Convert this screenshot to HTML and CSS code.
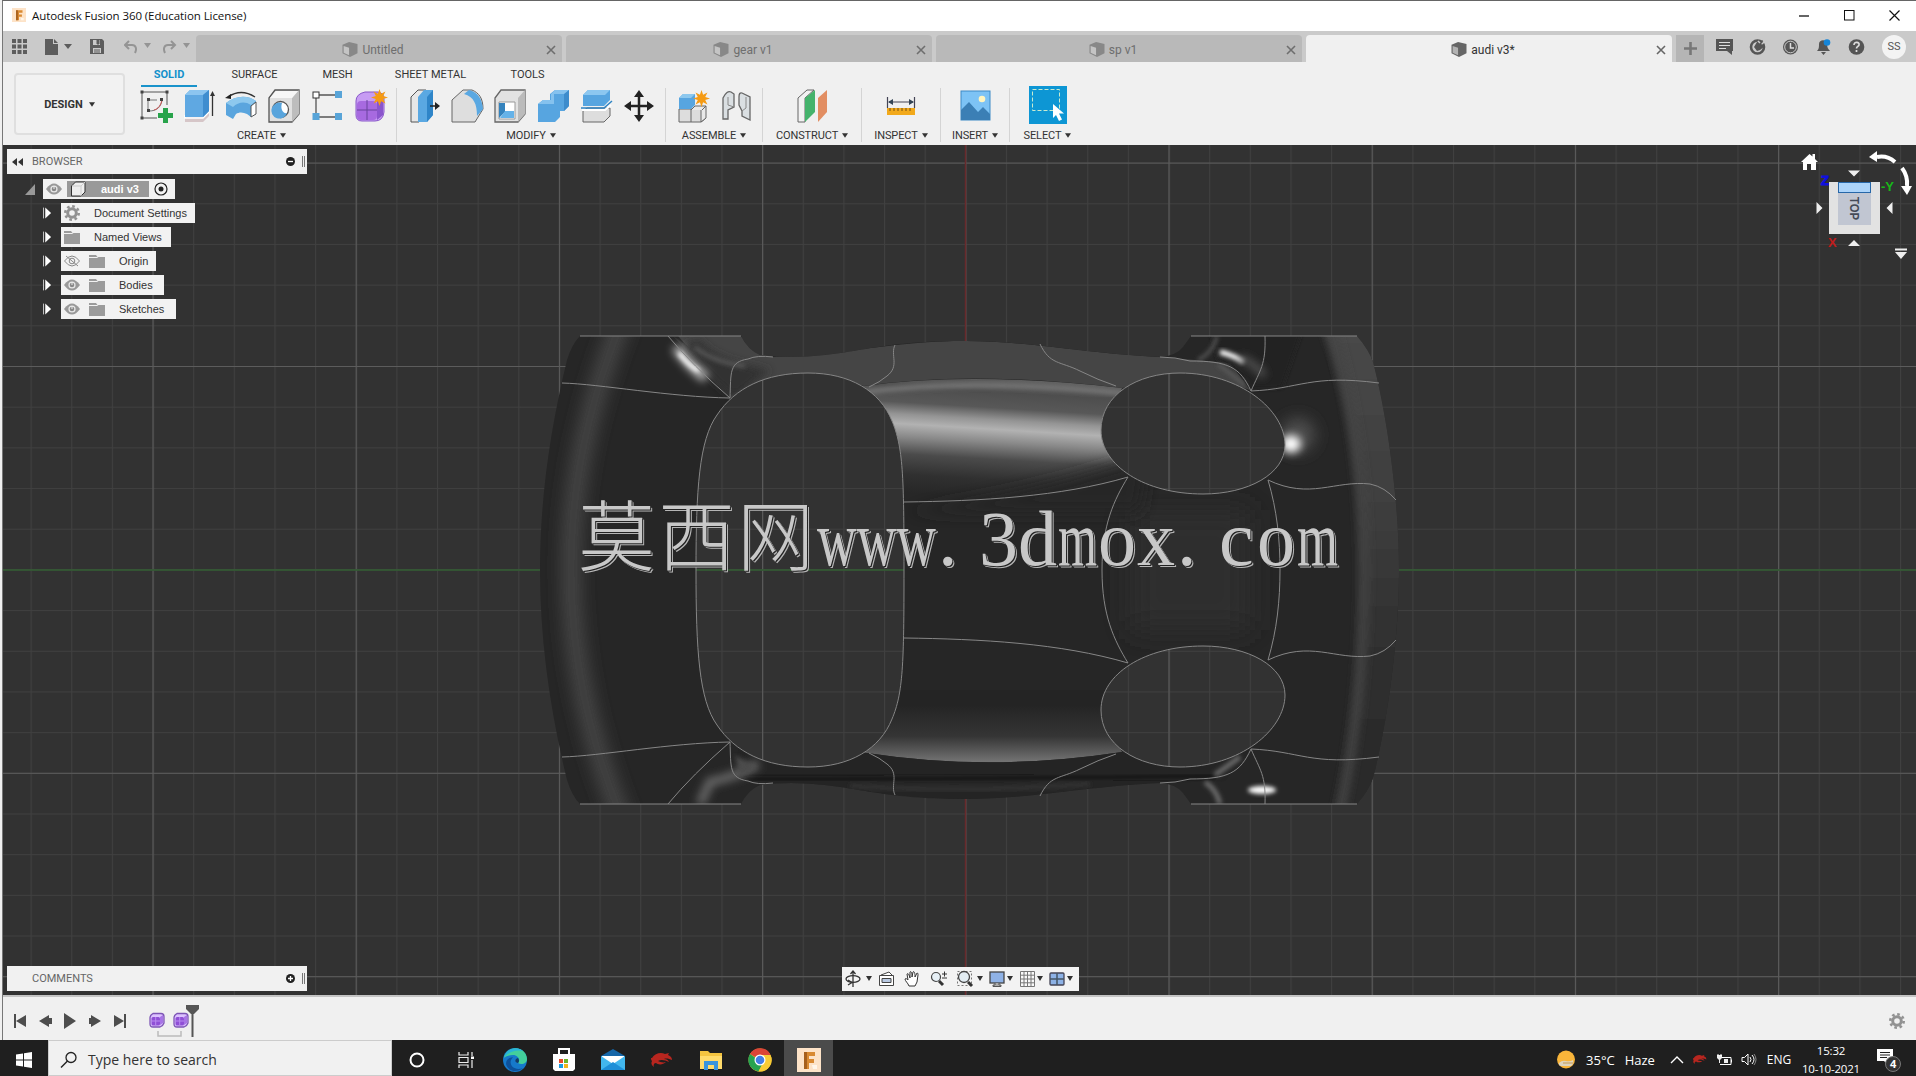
FILE: index.html
```html
<!DOCTYPE html>
<html lang="en">
<head>
  <meta charset="UTF-8">
  <title>Autodesk Fusion 360 (Education License)</title>
  <link rel="stylesheet" href="styles.css">
</head>
<body>
<svg class="defs" width="0" height="0">
  <defs>
    <symbol id="cube" viewBox="0 0 16 16">
      <path d="M0 3L7 0l9 2v10l-8 4-8-4z" fill="currentColor"/>
      <path d="M1.2 4.2L7 6v8.2L1.2 11.4z" fill="#fff" opacity=".5"/>
    </symbol>
    <symbol id="caret" viewBox="0 0 8 6"><path d="M0 0h8L4 6z" fill="currentColor"/></symbol>
    <symbol id="close" viewBox="0 0 10 10"><path d="M1 1l8 8M9 1L1 9" stroke="currentColor" stroke-width="1.6"/></symbol>
    <symbol id="eye" viewBox="0 0 16 12">
      <path d="M0 6q8-11 16 0q-8 11-16 0z" fill="#999"/>
      <circle cx="8" cy="6" r="3.6" fill="#e8e8e8"/><circle cx="8" cy="6" r="2.3" fill="#888"/><path d="M8 3v3" stroke="#eee"/>
    </symbol>
    <symbol id="folder" viewBox="0 0 16 13"><path d="M0 0h7l1.500 2H0zM0 3h8l1.500-1H16v11H0z" fill="#9b9b9b"/></symbol>
    <symbol id="gear" viewBox="0 0 16 16">
      <circle cx="8" cy="8" r="4.300" fill="none" stroke="#929292" stroke-width="3"/>
      <circle cx="8" cy="8" r="6.700" fill="none" stroke="#929292" stroke-width="2.600" stroke-dasharray="2.630 2.630"/>
    </symbol>
    <symbol id="tri" viewBox="0 0 10 12"><path d="M.5 0v12" stroke="#ddd"/><path d="M2.500 0v12L9 6z" fill="#fff"/></symbol>
    <symbol id="form" viewBox="0 0 16 16">
      <path d="M1 6q0-3 3-4.500h8q3 0 3 3V11q-1 3-4 4H4q-3 0-3-3z" fill="#dcc2ff" stroke="#7d55b5" stroke-width="1.300"/>
      <rect x="2.500" y="5" width="8.500" height="8.500" rx="1.500" fill="#8f4fd6"/>
      <path d="M6.700 5v8M2.500 9H11" stroke="#b98af0"/><path d="M11 5l3-2v8l-3 2z" fill="#a874e6"/>
    </symbol>
    <symbol id="spark" viewBox="0 0 16 16"><path d="M8 0l1.500 4.500L13.600 2.400 11.500 6.500 16 8l-4.500 1.500 2.100 4.100-4.100-2.100L8 16l-1.500-4.500-4.100 2.100 2.100-4.100L0 8l4.500-1.500L2.400 2.400l4.100 2.100z" fill="#f59b14"/></symbol>
    <symbol id="fusion" viewBox="0 0 24 24">
      <rect width="24" height="24" fill="#fde3c8"/>
      <path d="M7 4h11v4h-6v3h5v4h-5v6H7z" fill="#d98a32"/><path d="M7 4h3v17H7z" fill="#a65f1c"/><path d="M15 17h5v4h-4z" fill="#fff6ea"/>
    </symbol>
    <symbol id="dragon" viewBox="0 0 22 16"><path d="M1 6C4 1 10 0 14 2l4-1-1 2c3 1 4 3 4 5-3-1-5-2-8-1 3 0 4 1 5 3-4-2-8-3-11-1 2 1 5 2 8 1-3 3-8 3-10 1-2 0-3 2-2 4-3-2-3-4-2-6-1-1-1-2-1-3z" fill="#b8261f"/></symbol>
  </defs>
</svg>

<div class="app">
  <header class="titlebar">
    <svg class="logo" width="14" height="14"><use href="#fusion"/></svg>
    <span class="app-name">Autodesk Fusion 360 (Education License)</span>
    <div class="win-buttons">
      <svg width="11" height="11"><path d="M0 6h10" stroke="#111" stroke-width="1.300"/></svg>
      <svg width="11" height="11"><rect x=".5" y=".5" width="9.500" height="9.500" fill="none" stroke="#111"/></svg>
      <svg width="11" height="11"><path d="M.5 .5l10 10M10.500 .5l-10 10" stroke="#111" stroke-width="1.200"/></svg>
    </div>
  </header>

  <nav class="tabbar">
    <div class="quick">
      <svg class="grid-icon" width="15" height="15" fill="#5d5d5d"><path d="M0 0h4v4H0zM5.500 0h4v4h-4zM11 0h4v4h-4zM0 5.500h4v4H0zM5.500 5.500h4v4h-4zM11 5.500h4v4h-4zM0 11h4v4H0zM5.500 11h4v4h-4zM11 11h4v4h-4z"/></svg>
      <svg class="file-icon" width="27" height="16" fill="#5d5d5d"><path d="M0 0h8v5h5v11H0zM9 0l4 4H9zM19 5h8l-4 5z"/></svg>
      <svg class="save-icon" width="14" height="15"><path d="M0 0h12l2 2v13H0z" fill="#5d5d5d"/><path d="M3 1h7v5H3zM3 9h8v5H3z" fill="#c9c9c9"/><path d="M7 1h2v4H7zM4 11h6M4 13h6" fill="#5d5d5d" stroke="#5d5d5d"/></svg>
      <svg class="undo-icon" width="27" height="14"><path d="M5 1L1 5l4 4M1 5h7c4 0 5 4 3 8" fill="none" stroke="#949494" stroke-width="2"/><path d="M20 3h7l-3.500 5z" fill="#949494"/></svg>
      <svg class="redo-icon" width="27" height="14"><path d="M8 1l4 4-4 4M12 5H5C1 5 0 9 2 13" fill="none" stroke="#949494" stroke-width="2"/><path d="M20 3h7l-3.500 5z" fill="#949494"/></svg>
    </div>
    <div class="tab"><span class="tab-name"><svg width="16" height="15"><use href="#cube"/></svg>Untitled</span><svg class="tab-close" width="10" height="10"><use href="#close"/></svg></div>
    <div class="tab"><span class="tab-name"><svg width="16" height="15"><use href="#cube"/></svg>gear v1</span><svg class="tab-close" width="10" height="10"><use href="#close"/></svg></div>
    <div class="tab"><span class="tab-name"><svg width="16" height="15"><use href="#cube"/></svg>sp v1</span><svg class="tab-close" width="10" height="10"><use href="#close"/></svg></div>
    <div class="tab active"><span class="tab-name"><svg width="16" height="15"><use href="#cube"/></svg>audi v3*</span><svg class="tab-close" width="10" height="10"><use href="#close"/></svg></div>
    <div class="tab-add"><svg width="13" height="13"><path d="M6.500 0v13M0 6.500h13" stroke="#777" stroke-width="2.600"/></svg></div>
    <div class="status-icons">
      <svg width="17" height="16"><path d="M0 0h17v12h-1v4l-5-4H0z" fill="#555"/><path d="M3 3.500h11M3 6.500h11M3 9.500h7" stroke="#ddd" stroke-width="1.200"/></svg>
      <svg width="17" height="16"><circle cx="8.500" cy="8" r="6.500" fill="none" stroke="#555" stroke-width="2.600"/><path d="M5 8l3-5 6-2-2 4 4 2-5 4-3 1z" fill="#555"/><path d="M9 2l2 2M13 5l3-3" stroke="#ccc" stroke-width="1.500"/></svg>
      <svg width="17" height="16"><circle cx="8.500" cy="8" r="7.500" fill="#555"/><circle cx="8.500" cy="8" r="5.800" fill="none" stroke="#ccc"/><path d="M8.500 4v5H12" fill="none" stroke="#ddd" stroke-width="1.500"/></svg>
      <svg width="17" height="16"><path d="M2 12c2-2 2-4 2-7 0-5 8-5 8 0 0 3 1 5 3 7zM6 13h5l-2.500 3z" fill="#555"/><circle cx="12" cy="3.500" r="3.300" fill="#1585d8"/></svg>
      <svg width="17" height="16"><circle cx="8.500" cy="8" r="7.800" fill="#555"/><path d="M6 6c0-4 6-3 5 0-.5 1.500-2.500 1.500-2.500 3.500M8.500 11v2" fill="none" stroke="#ddd" stroke-width="1.700"/></svg>
    </div>
    <span class="avatar">SS</span>
  </nav>

  <section class="ribbon">
    <button class="workspace">DESIGN <svg width="6" height="5"><use href="#caret"/></svg></button>
    <div class="ribbon-main">
      <div class="ribbon-tabs">
        <span class="rt solid">SOLID</span>
        <span class="rt surface">SURFACE</span>
        <span class="rt mesh">MESH</span>
        <span class="rt sheet">SHEET METAL</span>
        <span class="rt tools">TOOLS</span>
      </div>
      <div class="groups">
        <div class="group create">
          <div class="icons">
            <svg viewBox="0 0 32 34"><path d="M3 3h25v13M3 3v26h15" fill="none" stroke="#555"/><path d="M9 11h9M9 11v11M10 22c8 0 12-4 13-11" fill="none" stroke="#777"/><path d="M23 11c-1 5-4 9-8 10" fill="none" stroke="#d05050"/><path d="M1.500 1.500h3v3h-3zM26.500 1.500h3v3h-3zM1.500 27.500h3v3h-3zM8 9h3v3H8zM21 9h3v3h-3zM8 20h3v3H8z" fill="#444"/><path d="M24 19h5v5h5v5h-5v5h-5v-5h-5v-5h5z" fill="#28a34b"/></svg>
            <svg viewBox="0 0 32 34"><path d="M3 26h18l6-6v7l-6 6H3z" fill="#d6c6c8"/><path d="M3 26v3h18l6-6v-2" fill="none" stroke="#fff" stroke-width="1.500"/><path d="M3 6l5-5h19v21l-6 6H3z" fill="#5fa8e2"/><path d="M3 6l5-5h19l-6 5z" fill="#8cc5f0"/><path d="M21 6l6-5v21l-6 6z" fill="#3f8dcf"/><path d="M30.500 27V5" stroke="#333" stroke-width="1.300"/><path d="M28 7l2.500-5L33 7z" fill="#333"/></svg>
            <svg viewBox="0 0 32 34"><path d="M1 14c10-8 22-8 30-2v13l-5 3-4-3c-4-2-8-2-11 0l-3 5-7-4z" fill="#5aa5de"/><path d="M1 14c10-8 22-8 30-2l-5 4c-6-4-13-3-18 2z" fill="#8dc8ee"/><path d="M26 17l5-4v12l-5 3z" fill="#fff" stroke="#555"/><path d="M3 8q13-9 27 0" fill="none" stroke="#333" stroke-width="1.300"/><path d="M0 9l6-4v5z" fill="#222"/></svg>
            <svg viewBox="0 0 32 34"><path d="M1 9l6-8h24v24l-7 8H1z" fill="#e0e0e0" stroke="#555" stroke-width="1.300"/><path d="M24 9l7-8v24l-7 8z" fill="#bdbdbd"/><path d="M2 9l6-7h22l-6 7z" fill="#f7f7f7"/><circle cx="12.500" cy="20.500" r="8" fill="#fff" stroke="#555" stroke-width="1.300"/><path d="M14 14a8 8 0 1 0 5 10c-4 1-7-4-5-10z" fill="#58a4dc"/></svg>
            <svg viewBox="0 0 32 34"><path d="M5 7v21M5 6h22M5 28h22" stroke="#555" stroke-width="1.300"/><rect x="2" y="3" width="6" height="6" fill="#fff" stroke="#333"/><path d="M24 2h7v7h-7zM1.500 24h7v7h-7zM24 24h7v7h-7z" fill="#58a4d8"/></svg>
            <svg viewBox="0 0 32 34"><path d="M2 12q0-7 9-9h13q6 1 6 7v13q-1 9-9 9H8q-6 0-6-6z" fill="#c79cf3" stroke="#8857c9"/><path d="M23 12l6-3v17l-6 5z" fill="#8a55cc"/><rect x="3" y="12" width="20" height="19" rx="4" fill="#a76ae0"/><path d="M13 11v20M3 21h20" stroke="#69429c"/><svg x="17" y="0" width="17" height="17"><use href="#spark"/></svg></svg>
          </div>
          <span class="group-name">CREATE <svg width="6" height="5"><use href="#caret"/></svg></span>
        </div>
        <div class="group modify">
          <div class="icons">
            <svg viewBox="0 0 32 34"><path d="M3 8l7-7h8v25l-7 7H3z" fill="#e7e7e7" stroke="#555"/><path d="M10 8l6-7h9v25l-6 7h-9z" fill="#5aa8e2"/><path d="M19 8l6-7v25l-6 7z" fill="#2f85c8"/><path d="M22 17h9" stroke="#222" stroke-width="1.500"/><path d="M27 13l5 4-5 4z" fill="#222"/></svg>
            <svg viewBox="0 0 32 34"><path d="M1 33V11L12 1h9c7 3 11 8 11 19l-8 13z" fill="#dedede" stroke="#666"/><path d="M13 5l5-4c9 2 13 9 14 19l-6 7c0-12-3-19-13-22z" fill="#5aa8e2"/></svg>
            <svg viewBox="0 0 32 34"><path d="M1 9l6-8h24v24l-7 8H1z" fill="#e2e2e2" stroke="#666" stroke-width="1.300"/><path d="M24 9l7-8v24l-7 8z" fill="#bbb"/><path d="M5 13h16v17H5z" fill="#fff" stroke="#999"/><path d="M5 14h6v9l-6 6z" fill="#3583bd"/><path d="M6 29l5-7h9v7z" fill="#65b2e8"/></svg>
            <svg viewBox="0 0 32 34"><path d="M1 15l5-4h7V5l5-4h14v16l-5 5h-4v6l-5 5H1z" fill="#57a5e0"/><path d="M1 15l5-4h8v-6l4-4h14l-4 4H17v10z" fill="#85c2ee"/><path d="M27 5l5-4v16l-5 5z" fill="#3d8ccc"/></svg>
            <svg viewBox="0 0 32 34"><path d="M3 22l4-3h23v8l-6 6H3z" fill="#ddd" stroke="#666"/><path d="M3 6l5-5h22v10l-6 6H3z" fill="#57a5e0"/><path d="M3 6l5-5h22l-5 5z" fill="#8cc7f0"/><path d="M1 19h23l8-7" fill="none" stroke="#2f84c4" stroke-width="1.500"/><path d="M2 21h23l6-5" fill="none" stroke="#fff" stroke-width="2"/></svg>
            <svg viewBox="0 0 32 34"><path d="M16 4v26M4 17h24" stroke="#222" stroke-width="2.500"/><path d="M16 1l5 7H11zM16 33l5-7H11zM1 17l7-5v10zM31 17l-7-5v10z" fill="#222"/></svg>
          </div>
          <span class="group-name">MODIFY <svg width="6" height="5"><use href="#caret"/></svg></span>
        </div>
        <div class="group assemble">
          <div class="icons">
            <svg viewBox="0 0 32 34"><path d="M2 20h26V30l-4 3H2z" fill="#ddd" stroke="#666"/><path d="M14 20v13M14 21l4-4h11l-4 4M29 17v12l-5 4V21" fill="#e9e9e9" stroke="#666"/><path d="M2 20V9l4-4h12v11l-4 4z" fill="#57a5e0"/><path d="M2 9l4-4h12l-4 4z" fill="#8dc8ee"/><svg x="16" y="1" width="17" height="17"><use href="#spark"/></svg></svg>
            <svg viewBox="0 0 32 34"><path d="M3 30V9q4-8 8-6l3 2v13l-6 3v9zM30 31V8l-8-4q-3-1-3 4v8l3 6v5z" fill="#dadfe2" stroke="#666" stroke-width="1.300"/><path d="M14 18l-6-2V8M22 22l4-3V8" fill="none" stroke="#888"/></svg>
          </div>
          <span class="group-name">ASSEMBLE <svg width="6" height="5"><use href="#caret"/></svg></span>
        </div>
        <div class="group construct">
          <div class="icons"><svg viewBox="0 0 32 34"><path d="M2 9l9-8h7L9 9v24H2z" fill="#f2f2f2" stroke="#666"/><path d="M9 9l10-8v22L9 33z" fill="#45b36c"/><path d="M22 9l9-8v22l-9 10z" fill="#e28e62"/></svg></div>
          <span class="group-name">CONSTRUCT <svg width="6" height="5"><use href="#caret"/></svg></span>
        </div>
        <div class="group inspect">
          <div class="icons"><svg viewBox="0 0 32 34"><path d="M2.500 8v11M29.500 8v11M4 13h24" stroke="#445" stroke-width="1.200"/><path d="M3 13l5-3v6zM29 13l-5-3v6z" fill="#345"/><path d="M2 19h28v7H2z" fill="#f2a91b"/><path d="M5 19v3M9 19v3M13 19v3M17 19v3M21 19v3M25 19v3" stroke="#765010"/></svg></div>
          <span class="group-name">INSPECT <svg width="6" height="5"><use href="#caret"/></svg></span>
        </div>
        <div class="group insert">
          <div class="icons"><svg viewBox="0 0 32 34"><rect x="2" y="2" width="29" height="29" fill="#7dc3f5" stroke="#3c8ac6"/><circle cx="23" cy="10" r="3.300" fill="#fff5c0"/><path d="M2 21l8-8 9 10 5-5 7 7v6H2z" fill="#3b7fb5"/></svg></div>
          <span class="group-name">INSERT <svg width="6" height="5"><use href="#caret"/></svg></span>
        </div>
        <div class="group select">
          <div class="icons"><svg class="picked" viewBox="0 0 38 38"><rect width="38" height="38" fill="#0d96d4"/><rect x="3.500" y="3.500" width="27" height="21" fill="none" stroke="#c8ebd0" stroke-dasharray="4 2"/><path d="M24 18v14l3-3 3 6 3-1.500-3-6h5z" fill="#fff"/></svg></div>
          <span class="group-name">SELECT <svg width="6" height="5"><use href="#caret"/></svg></span>
        </div>
      </div>
    </div>
  </section>

  <main class="viewport">
    <svg class="scene" viewBox="3 145 1913 850">
      <defs>
        <pattern id="minor" x="965.3" y="569.4" width="40.640" height="40.680" patternUnits="userSpaceOnUse"><path d="M.5 0v40.680M0 .5h40.640" stroke="#404040" stroke-width="1.200"/></pattern>
        <pattern id="major" x="965.300" y="569.400" width="203.200" height="203.400" patternUnits="userSpaceOnUse"><path d="M.5 0v203.400M0 .5h203.200" stroke="#5c5c5c" stroke-width="1.200"/></pattern>
        <clipPath id="body">
          <path clip-rule="evenodd" d="M580 336H741Q748 350 760 355Q790 359 825 355C870 350 890 341 966 341C1030 341 1080 353 1160 357Q1176 356 1183 347L1191 336H1357Q1369 350 1373 362C1387 415 1399 500 1399 570C1399 640 1387 725 1373 778Q1369 790 1357 804H1191L1183 793Q1176 784 1160 783C1080 787 1030 799 966 799C890 799 870 790 825 785Q790 781 760 785Q748 790 741 804H580Q572 796 567 780C550 710 540 640 540 570C540 500 550 430 567 360Q572 344 580 336Z
          M696 570C696 490 699 440 717 415C735 388 765 373 808 373C850 373 880 391 892 421C903 447 904 475 904 570C904 665 903 693 892 719C880 749 850 767 808 767C765 767 735 752 717 725C699 700 696 650 696 570Z
          M1101 430C1101 395 1137 373 1180 373C1240 373 1285 410 1285 445C1285 474 1248 494 1203 494C1145 494 1101 466 1101 430Z
          M1101 710C1101 745 1137 767 1180 767C1240 767 1285 730 1285 695C1285 666 1248 646 1203 646C1145 646 1101 674 1101 710Z"/>
        </clipPath>
        <filter id="b2" x="-50%" y="-50%" width="200%" height="200%"><feGaussianBlur stdDeviation="2"/></filter>
        <filter id="b4" filterUnits="userSpaceOnUse" x="500" y="300" width="940" height="540"><feGaussianBlur stdDeviation="4"/></filter>
        <filter id="b8" filterUnits="userSpaceOnUse" x="500" y="300" width="940" height="540"><feGaussianBlur stdDeviation="8"/></filter>
        <filter id="b14" filterUnits="userSpaceOnUse" x="500" y="300" width="940" height="540"><feGaussianBlur stdDeviation="14"/></filter>
        <linearGradient id="shine" x1="966" y1="376" x2="966" y2="496" gradientUnits="userSpaceOnUse" gradientTransform="rotate(3.5 966 425)">
          <stop offset="0" stop-color="#606060"/><stop offset=".12" stop-color="#4e4e4e"/><stop offset=".25" stop-color="#585858"/><stop offset=".35" stop-color="#949494"/><stop offset=".43" stop-color="#b2b2b2"/><stop offset=".54" stop-color="#888"/><stop offset=".68" stop-color="#4b4b4b"/><stop offset=".85" stop-color="#303030"/><stop offset="1" stop-color="#272727"/>
        </linearGradient>
        <linearGradient id="low" x1="0" y1="705" x2="0" y2="762" gradientUnits="userSpaceOnUse"><stop offset="0" stop-color="#242424"/><stop offset=".55" stop-color="#353535"/><stop offset="1" stop-color="#747474"/></linearGradient>
        <linearGradient id="side" x1="0" y1="336" x2="0" y2="804" gradientUnits="userSpaceOnUse"><stop offset="0" stop-color="#484848"/><stop offset=".35" stop-color="#3f3f3f"/><stop offset=".65" stop-color="#303030"/><stop offset="1" stop-color="#292929"/></linearGradient>
        <g id="edges">
          <path d="M562 383C600 384 670 397 730 398M668 336Q692 365 730 398M730 398C731 372 729 362 748 359Q757 355 773 357"/>
          <path d="M895 345C890 355 900 366 887 376Q880 382 869 387M1040 344C1050 365 1060 361 1080 371Q1098 380 1116 386"/>
          <path d="M904 502C980 501 1060 497 1128 477C1114 500 1102 525 1102 570M1268 480C1277 510 1280 540 1280 570"/>
          <path d="M1268 480C1310 500 1335 480 1370 484Q1385 487 1396 500M1265 336C1266 365 1260 370 1251 391C1300 389 1310 374 1379 383M1251 391C1240 367 1228 361 1190 361Q1175 357 1160 357"/>
        </g>
      </defs>
      <rect x="3" y="145" width="1913" height="850" fill="#323232"/>
      <rect x="3" y="145" width="1913" height="850" fill="url(#minor)"/>
      <rect x="3" y="145" width="1913" height="850" fill="url(#major)"/>
      <path d="M3 570h1913" stroke="#2e5a2e" stroke-width="1.500"/>
      <path d="M965.500 145v850" stroke="#682a2c" stroke-width="1.500"/>

      <g clip-path="url(#body)">
        <rect x="530" y="330" width="880" height="480" fill="#262626"/>
        <!-- side panels -->
        <path d="M622 320C590 400 571 480 571 570S590 740 622 820" fill="none" stroke="#454545" stroke-width="20" filter="url(#b8)"/>
        <path d="M1322 325C1352 400 1362 490 1362 570S1352 740 1334 820H1420V325Z" fill="url(#side)" filter="url(#b4)"/>
        <path d="M1330 325C1355 410 1364 490 1364 570S1356 740 1338 820" fill="none" stroke="#444" stroke-width="9" filter="url(#b4)"/>
        <path d="M1130 510h120v120h-120z" fill="#2d2d2d" filter="url(#b14)"/>
        <!-- roof shine -->
        <path d="M850 388L864 386Q970 371 1122 388L1102 430 1128 477Q1040 503 904 502H850Z" fill="url(#shine)"/>
        <path d="M1150 452C1090 474 1010 496 904 512H1140Z" fill="#252525" filter="url(#b8)"/>
        <path d="M866 392Q970 378 1122 393" fill="none" stroke="#757575" stroke-width="5" filter="url(#b2)"/>
        <path d="M673 330L740 336 773 357C860 352 900 341 966 341C1040 342 1080 353 1160 357L1230 363 1250 390Q1200 370 1122 388Q970 370 864 386L808 373Q760 375 731 398Z" fill="#454545"/>
        <path d="M673 336L745 385 728 397Z" fill="#343434"/>
        <path d="M700 340Q712 360 770 370L735 398Q700 372 685 345Z" fill="#303030" filter="url(#b4)"/>
        <path d="M695 347Q712 362 745 366" fill="none" stroke="#585858" stroke-width="4" filter="url(#b2)"/>
        <path d="M676 347Q688 365 706 378" fill="none" stroke="#bbb" stroke-width="10" filter="url(#b4)"/>
        <path d="M679 353Q689 366 699 371" fill="none" stroke="#fff" stroke-width="4" filter="url(#b2)"/>
        <path d="M1210 331h92l-20 57-32 1q-10-22-32-28z" fill="#232323" filter="url(#b2)"/>
        <path d="M1220 352Q1233 355 1244 362" fill="none" stroke="#fff" stroke-width="5" filter="url(#b2)"/>
        <path d="M1240 358q15 5 24 18" fill="none" stroke="#555" stroke-width="7" filter="url(#b4)"/>
        <path d="M1217 336Q1213 353 1198 360M1218 364L1245 385" fill="none" stroke="#5c5c5c" stroke-width="3" filter="url(#b2)"/>
        <circle cx="1298" cy="435" r="17" fill="#505050" filter="url(#b8)"/>
        <ellipse cx="1291" cy="444" rx="10" ry="9" fill="#fff" filter="url(#b4)"/>
        <!-- lower sill -->
        <path d="M850 690H1128L1102 710 1122 752Q990 772 867 753L850 750Z" fill="url(#low)"/>
        <path d="M740 741L808 767 867 753Q990 772 1122 752L1180 767 1250 750 1225 781 1160 783C1080 787 1030 799 966 799S850 787 773 783L733 775Z" fill="#242424"/>
        <path d="M745 779Q970 779 1215 776" fill="none" stroke="#191919" stroke-width="4" filter="url(#b2)"/>
        <path d="M850 786Q966 793 1090 784" fill="none" stroke="#333" stroke-width="5" filter="url(#b2)"/>
        <path d="M758 763Q742 775 710 782L700 804" fill="none" stroke="#666" stroke-width="9" filter="url(#b4)"/>
        <path d="M735 755L757 768 740 775Z" fill="#4c4c4c" filter="url(#b2)"/>
        <path d="M1240 757L1215 775M1205 782Q1217 790 1220 804" fill="none" stroke="#6c6c6c" stroke-width="5" filter="url(#b2)"/>
        <ellipse cx="1262" cy="790" rx="14" ry="4" fill="#fff" filter="url(#b2)"/>
      </g>
      <g class="edge">
        <use href="#edges"/><use href="#edges" transform="matrix(1 0 0 -1 0 1140)"/>
        <path d="M696 570C696 490 699 440 717 415C735 388 765 373 808 373C850 373 880 391 892 421C903 447 904 475 904 570C904 665 903 693 892 719C880 749 850 767 808 767C765 767 735 752 717 725C699 700 696 650 696 570Z"/>
        <path d="M1101 430C1101 395 1137 373 1180 373C1240 373 1285 410 1285 445C1285 474 1248 494 1203 494C1145 494 1101 466 1101 430ZM1101 710C1101 745 1137 767 1180 767C1240 767 1285 730 1285 695C1285 666 1248 646 1203 646C1145 646 1101 674 1101 710Z"/>
        <path d="M580 336H741M1191 336H1357M580 804H741M1191 804H1357"/>
      </g>

      <text class="watermark" y="565"><tspan class="han" x="578">莫</tspan><tspan class="han" x="658">西</tspan><tspan class="han" x="737">网</tspan><tspan x="817" textLength="119" lengthAdjust="spacingAndGlyphs">www</tspan><tspan x="938">.</tspan><tspan x="979">3</tspan><tspan x="1018">d</tspan><tspan x="1058" textLength="39" lengthAdjust="spacingAndGlyphs">m</tspan><tspan x="1098" textLength="38" lengthAdjust="spacingAndGlyphs">o</tspan><tspan x="1137" textLength="38" lengthAdjust="spacingAndGlyphs">x</tspan><tspan x="1177">.</tspan><tspan x="1219">c</tspan><tspan x="1257" textLength="38" lengthAdjust="spacingAndGlyphs">o</tspan><tspan x="1297" textLength="41" lengthAdjust="spacingAndGlyphs">m</tspan></text>
    </svg>

    <aside class="browser">
      <div class="panel-head">
        <svg width="12" height="8"><path d="M5 0v8L0 4zM11 0v8L6 4z" fill="#333"/></svg>
        <span>BROWSER</span>
        <svg class="dot" width="9" height="9"><circle cx="4.500" cy="4.500" r="4.500" fill="#222"/><path d="M2 4.500h5" stroke="#fff" stroke-width="1.300"/></svg>
        <i class="grip"></i>
      </div>
      <ul class="tree">
        <li class="root">
          <svg width="10" height="11"><path d="M10 0v11H0z" fill="#999"/></svg>
          <div class="node"><svg width="16" height="12"><use href="#eye"/></svg><div class="picked-name"><svg width="17" height="16"><path d="M1.500 5l4-4H15v10l-4 4H1.500z" fill="#eee" stroke="#333" stroke-linejoin="round"/><path d="M2 5h9v10M11 5l4-4" fill="none" stroke="#ccc"/></svg><b>audi v3</b></div><svg width="14" height="14"><circle cx="7" cy="7" r="6" fill="none" stroke="#222" stroke-width="1.200"/><circle cx="7" cy="7" r="2.500" fill="#222"/></svg></div>
        </li>
        <li><svg width="9" height="12"><use href="#tri"/></svg><div class="node w134"><svg width="16" height="16"><use href="#gear"/></svg><span>Document Settings</span></div></li>
        <li><svg width="9" height="12"><use href="#tri"/></svg><div class="node w110"><svg width="16" height="13"><use href="#folder"/></svg><span>Named Views</span></div></li>
        <li><svg width="9" height="12"><use href="#tri"/></svg><div class="node deep w95"><svg width="16" height="12"><path d="M.5 6q7.500-10 15 0q-7.500 10-15 0z" fill="none" stroke="#888"/><circle cx="8" cy="6" r="2.800" fill="none" stroke="#888"/><path d="M2 1l12 10" stroke="#888"/></svg><svg width="16" height="13"><use href="#folder"/></svg><span>Origin</span></div></li>
        <li><svg width="9" height="12"><use href="#tri"/></svg><div class="node deep w103"><svg width="16" height="12"><use href="#eye"/></svg><svg width="16" height="13"><use href="#folder"/></svg><span>Bodies</span></div></li>
        <li><svg width="9" height="12"><use href="#tri"/></svg><div class="node deep w115"><svg width="16" height="12"><use href="#eye"/></svg><svg width="16" height="13"><use href="#folder"/></svg><span>Sketches</span></div></li>
      </ul>
    </aside>

    <svg class="viewcube" viewBox="1796 145 120 120">
      <path d="M1801 162l8.500-8 3 2.500V154h2.500v5l3 3h-2v8h-5v-6h-4v6h-4v-8z" fill="#fff"/>
      <path d="M1895 162q-8-7-18-5" fill="none" stroke="#fff" stroke-width="4"/><path d="M1869 157l8-6v11z" fill="#fff"/>
      <path d="M1902 168q6 8 5 18" fill="none" stroke="#fff" stroke-width="4"/><path d="M1901 186h11l-5 9z" fill="#fff"/>
      <text x="1821" y="185" fill="#1010e0" stroke="#1010e0">Z</text><text x="1828" y="247" fill="#c01c1c">X</text><text x="1881" y="191" fill="#18b818">-Y</text>
      <rect x="1829" y="182" width="51" height="52" fill="#e2e2e2"/><rect x="1838" y="182" width="33" height="43" fill="#c1c6d2"/>
      <rect x="1838.500" y="182.500" width="32" height="10" fill="#acd4fa" stroke="#2767a8"/>
      <text class="face" transform="translate(1850 197) rotate(90)" textLength="23" lengthAdjust="spacingAndGlyphs">TOP</text>
      <path d="M1848 170.500h12l-6 6zM1848 246h12l-6-6zM1816.500 202v12l6-6zM1892.500 202v12l-6-6zM1895 252h12l-6 7zM1895 248.500h12v2h-12z" fill="#eee"/>
    </svg>

    <div class="panel-head comments">
      <span>COMMENTS</span>
      <svg class="dot" width="9" height="9"><circle cx="4.500" cy="4.500" r="4.500" fill="#222"/><path d="M2 4.500h5M4.500 2v5" stroke="#fff" stroke-width="1.300"/></svg>
      <i class="grip"></i>
    </div>

    <div class="navbar">
      <svg width="28" height="18"><ellipse cx="8" cy="9" rx="7" ry="3.300" fill="none" stroke="#333" stroke-width="1.300"/><path d="M8 1v16M5.500 4L8 1l2.500 3M3 10l4 2.500-4 2.500" fill="none" stroke="#333" stroke-width="1.300"/><path d="M21 6h6l-3 5z" fill="#333"/></svg>
      <svg class="plain" width="17" height="18"><path d="M1.500 5.500h14v10h-14zM3 5l8-3 3 3" fill="#fff" stroke="#444"/><path d="M4 8.500h9v4H4z" fill="#b9c9e2" stroke="#444"/></svg>
      <svg class="plain" width="17" height="18"><path d="M5 16c-1-3-4-5-4-7 1-1 2 0 3 1L3 4c1-1 2 0 3 4V2c1-1 2 0 2 5l1-5c1-1 2 0 2 5l2-4c1 0 1 1 1 2l-1 7-2 4z" fill="#fff" stroke="#333"/></svg>
      <svg class="plain" width="17" height="18"><circle cx="6" cy="7" r="4.500" fill="#e6eff5" stroke="#444" stroke-width="1.200"/><path d="M9 11l4 4" stroke="#333" stroke-width="3"/><path d="M12 4h5M14.500 1.500v5M12 8h5" stroke="#333"/></svg>
      <svg width="28" height="18"><rect x="1.500" y="1.500" width="14" height="14" fill="none" stroke="#777" stroke-dasharray="2 2"/><circle cx="8" cy="7" r="5.500" fill="#e3edf3" stroke="#444" stroke-width="1.300"/><path d="M12 12l4 4" stroke="#333" stroke-width="3"/><path d="M21 6h6l-3 5z" fill="#333"/></svg>
      <svg width="25" height="18"><rect x="1" y="2" width="14" height="11" fill="#8fb2e6" stroke="#444" stroke-width="1.300"/><path d="M6 13v2H4v1.500h8V15h-2v-2" fill="#aaa" stroke="#555"/><path d="M18 6h6l-3 5z" fill="#333"/></svg>
      <svg width="25" height="18"><path d="M1.500 1.500h14v15h-14zM1.500 5.200h14M1.500 9h14M1.500 12.800h14M5 1.500v15M8.500 1.500v15M12 1.500v15" fill="#f9f9f9" stroke="#777"/><path d="M18 6h6l-3 5z" fill="#333"/></svg>
      <svg width="25" height="18"><rect x="1" y="3" width="14" height="12" rx="1" fill="#8db2e6" stroke="#445" stroke-width="1.300"/><path d="M8 3v12M1 9h14" stroke="#456" stroke-width="1.500"/><path d="M18 6h6l-3 5z" fill="#333"/></svg>
    </div>
  </main>

  <footer class="timeline">
    <svg width="114" height="16" fill="#4d4d4d"><path d="M0 1h2v14H0zM12 2v12L2 8zM35 2v12L25 8zM35 5h3v6h-3zM50 0v16l12-8zM75 5h2v6h-2zM77 2v12l10-6zM100 2v12l10-6zM110 1h2v14h-2z"/></svg>
    <div class="features">
      <svg width="52" height="34"><svg x="0" y="8" width="16" height="16"><use href="#form"/></svg><svg x="24" y="8" width="16" height="16"><use href="#form"/></svg><path d="M9 27v5h23v-5" fill="none" stroke="#bbb" stroke-width="1.500"/><path d="M37 1h13v4l-5 5h-3l-5-5z" fill="#555"/><path d="M43.500 8v25" stroke="#555" stroke-width="2"/></svg>
    </div>
    <svg class="tl-gear" width="16" height="16"><use href="#gear"/></svg>
  </footer>
</div>

<div class="taskbar">
  <div class="start"><svg width="16" height="16" fill="#fff"><path d="M0 2.500l7-1v6H0zM8 1.300L16 0v7.500H8zM0 8.500h7v6l-7-1zM8 8.500h8V16l-8-1.300z"/></svg></div>
  <div class="search"><svg width="18" height="18"><circle cx="11" cy="6.500" r="5" fill="none" stroke="#222" stroke-width="1.300"/><path d="M7.500 10L1 16.500" stroke="#222" stroke-width="1.500"/></svg>Type here to search</div>
  <div class="pinned">
    <div class="pin"><svg width="16" height="16"><circle cx="8" cy="8" r="6.500" fill="none" stroke="#fff" stroke-width="2"/></svg></div>
    <div class="pin"><svg width="16" height="16"><path d="M1 0v3h9V0M1 16v-3h9v3M1 5.500h9v5H1zM14 0v4M14 8v8" fill="none" stroke="#eee" stroke-width="1.200"/><path d="M13 4.500h3v2.500h-3z" fill="#fff"/></svg></div>
    <div class="pin"><svg width="24" height="24"><circle cx="12" cy="12" r="12" fill="#1679cb"/><path d="M1 10C3-3 23-3 24 11c0 5-6 6-9 4 3-3 0-8-5-8-4 0-7 1-9 3z" fill="#43cf9c"/><path d="M1 9C5-2 16-1 20 3 12 1 5 5 1 9z" fill="#29b4d8"/><path d="M8 12c-2 6 4 11 12 8-5 5-15 4-17-4 0-5 3-6 7-7z" fill="#0d519b"/><path d="M15 10q2 3 0 5c-3 0-4-4 0-5z" fill="#153c66"/></svg></div>
    <div class="pin"><svg width="24" height="24"><path d="M7 6V1h10v5" fill="none" stroke="#fff" stroke-width="2"/><path d="M1 6h22v15l-2 2H3l-2-2z" fill="#fff"/><path d="M7 11h4v4H7z" fill="#e84b2c"/><path d="M12 11h4v4h-4z" fill="#6fb629"/><path d="M7 16h4v4H7z" fill="#1c9be0"/><path d="M12 16h4v4h-4z" fill="#f5b41a"/></svg></div>
    <div class="pin"><svg width="24" height="24"><path d="M0 8l12-7 12 7v14H0z" fill="#1566a8"/><path d="M1 8h22v8H1z" fill="#fff"/><path d="M0 8l12 8 12-8v14H0z" fill="#42b7ee"/><path d="M0 22l12-8 12 8z" fill="#1e8fd8"/></svg></div>
    <div class="pin"><svg width="22" height="16"><use href="#dragon"/></svg></div>
    <div class="pin"><svg width="24" height="22"><path d="M1 2h8l2 2h12v16H1z" fill="#f4c440"/><path d="M1 7h22v13H1z" fill="#ffdb6b"/><path d="M5 21v-9h14v9h-4v-5H9v5z" fill="#3994dc"/></svg></div>
    <div class="pin"><svg width="24" height="24"><circle cx="12" cy="12" r="11.500" fill="#f4c52a"/><path d="M12 12L2 6a11.500 11.500 0 0 1 20.500 1z" fill="#db4437"/><path d="M2 6a11.500 11.500 0 0 0 8.500 17.400L15 15z" fill="#27a351"/><path d="M22.500 7H12v5l3 3-4.500 8.400A11.500 11.500 0 0 0 22.500 7z" fill="#f8cb35"/><circle cx="12" cy="12" r="5.500" fill="#fff"/><circle cx="12" cy="12" r="4.300" fill="#437ee6"/></svg></div>
    <div class="pin current"><svg width="24" height="24"><use href="#fusion"/></svg></div>
  </div>
  <div class="tray">
    <div class="t24"><svg width="20" height="20"><circle cx="10" cy="9.500" r="9" fill="#f9b53a"/><path d="M3 13q3-3 7-2t7-1q1 4-2 6H5q-3-1-2-3z" fill="#dfd4bd"/><path d="M7 13h10" stroke="#c59a55"/></svg></div>
    <div class="t85 weather"><span>35°C</span><span>Haze</span></div>
    <div class="t27"><svg width="14" height="8"><path d="M1 7l6-6 6 6" fill="none" stroke="#fff" stroke-width="1.400"/></svg></div>
    <div class="t20"><svg width="14" height="11" viewBox="0 0 22 16"><use href="#dragon"/></svg></div>
    <div class="t28"><svg width="16" height="12"><path d="M5 3.500h10v7H4" fill="none" stroke="#fff"/><path d="M8 5h4v4H8zM1 1h5v3L4 6v3H3V6L1 4z" fill="#eee"/><path d="M15.500 5.500v3M2 0v2M5 0v2" stroke="#fff"/></svg></div>
    <div class="t22"><svg width="16" height="13"><path d="M1 4.500h2.500L7 1v11L3.500 8.500H1z" fill="none" stroke="#fff"/><path d="M9 4q2 2.500 0 5M11 2q4 4.500 0 9" fill="none" stroke="#fff"/><path d="M13 1q4 5.500 0 11" fill="none" stroke="#888"/></svg></div>
    <div class="t38">ENG</div>
    <div class="t66 clock"><span>15:32</span><span>10-10-2021</span></div>
    <div class="t50"><svg width="26" height="24"><path d="M1 1h16v12h-5v4l-4-4H1z" fill="#fff"/><path d="M4 4.500h10M4 7h10M4 9.500h7" stroke="#222"/><circle cx="17" cy="16" r="7.500" fill="#333" stroke="#777"/><text class="badge" x="14" y="20">4</text></svg></div>
  </div>
</div>
</body>
</html>
```
FILE: styles.css
```css
* {
  margin: 0;
  padding: 0;
  box-sizing: border-box;
}
body {
  width: 1916px;
  height: 1076px;
  overflow: hidden;
  background: #f0f0f0;
  color: #333;
  font-family: Roboto, "Liberation Sans", sans-serif;
  font-size: 11px;
}
ul, li {
  list-style: none;
}
svg {
  display: block;
  flex: none;
}
.defs {
  height: 0;
}
.app {
  height: 1040px;
  border-top: 1px solid #656565;
  border-left: 1px solid #777;
  margin-left: 2px;
  display: flex;
  flex-direction: column;
}

/* title bar */
.titlebar {
  height: 30px;
  background: #fff;
  display: flex;
  align-items: center;
  padding: 0 16px 2px 9px;
}
.app-name {
  margin-left: 6px;
  font-family: "Open Sans", "Noto Sans", sans-serif;
  font-size: 11.5px;
  letter-spacing: -.08px;
  color: #111;
}
.win-buttons {
  margin-left: auto;
  display: flex;
  gap: 34px;
}

/* document tabs */
.tabbar {
  height: 31px;
  background: #cacaca;
  display: flex;
  align-items: flex-end;
}
.quick {
  width: 193px;
  height: 31px;
  display: flex;
  align-items: center;
  padding-left: 9px;
}
.file-icon {
  margin-left: 18px;
}
.save-icon {
  margin-left: 18px;
}
.undo-icon {
  margin-left: 20px;
}
.redo-icon {
  margin-left: 12px;
}
.tab {
  width: 366px;
  height: 27px;
  margin-right: 4px;
  border-radius: 4px 4px 0 0;
  background: #b9b9b9;
  color: #6e6e6e;
  display: flex;
  align-items: center;
  padding: 2px 6px 0 4px;
  font-size: 12px;
}
.tab-name {
  flex: 1;
  display: flex;
  align-items: center;
  justify-content: center;
  gap: 4px;
}
.tab-name svg {
  color: #888;
}
.tab.active {
  background: #f0f0f0;
  color: #333;
}
.tab.active svg {
  color: #666;
}
.tab-add {
  width: 28px;
  height: 27px;
  background: #b5b5b5;
  display: flex;
  align-items: center;
  justify-content: center;
}
.status-icons {
  display: flex;
  gap: 16px;
  margin-left: 12px;
  padding-bottom: 7px;
}
.avatar {
  width: 24px;
  height: 24px;
  margin: 0 0 3px 17px;
  border-radius: 50%;
  background: #f3f3f3;
  text-align: center;
  line-height: 24px;
  color: #555;
}

/* ribbon */
.ribbon {
  height: 83px;
  background: #f0f0f0;
  display: flex;
}
.workspace {
  width: 111px;
  height: 62px;
  margin: 11px 2px 0 11px;
  border: 2px solid #dfdfdf;
  border-radius: 4px;
  background: #f2f2f2;
  color: #333;
  font: bold 11px Roboto, sans-serif;
  display: flex;
  align-items: center;
  justify-content: center;
  gap: 6px;
}
.ribbon-main {
  flex: 1;
}
.ribbon-tabs {
  height: 25px;
  padding-left: 14px;
  display: flex;
}
.rt {
  text-align: center;
  line-height: 26px;
}
.solid {
  width: 56px;
  color: #1390cb;
  font-weight: bold;
  border-bottom: 2px solid #1a93cb;
}
.surface {
  width: 115px;
}
.mesh {
  width: 51px;
}
.sheet {
  width: 135px;
}
.tools {
  width: 59px;
}
.groups {
  display: flex;
  padding-top: 1px;
}
.group {
  height: 54px;
  padding-top: 1px;
  border-right: 1px solid #d4d4d4;
  display: flex;
  flex-direction: column;
  align-items: center;
  justify-content: space-between;
}
.create {
  width: 270px;
}
.modify {
  width: 269px;
}
.assemble {
  width: 97px;
}
.construct {
  width: 99px;
}
.inspect {
  width: 79px;
}
.insert {
  width: 69px;
}
.select {
  width: 75px;
  border-right: 0;
}
.icons {
  display: flex;
  gap: 11px;
  height: 34px;
}
.create .icons {
  padding-left: 2px;
}
.icons > svg {
  width: 32px;
  height: 34px;
  overflow: visible;
}
.icons > .picked {
  width: 38px;
  height: 38px;
  margin-top: -3px;
}
.group-name {
  display: flex;
  align-items: center;
  gap: 4px;
  line-height: 13px;
  letter-spacing: -.1px;
  white-space: nowrap;
}

/* canvas */
.viewport {
  position: relative;
  height: 850px;
  background: #323232;
}
.scene {
  position: absolute;
  left: 0;
  top: 0;
  width: 1913px;
  height: 850px;
}
.edge {
  fill: none;
  stroke: #868686;
  stroke-width: 1;
}
.watermark {
  font-family: "Liberation Serif", serif;
  font-size: 78px;
  fill: #c8c8c8;
  filter: drop-shadow(1px 1px 0 #222) drop-shadow(1px 1px 0 #b5b5b5);
}
.han {
  font-family: "Noto Sans CJK SC", sans-serif;
  font-size: 77px;
  font-weight: 300;
}
.browser {
  position: absolute;
  left: 4px;
  top: 4px;
  font-family: "Liberation Sans", sans-serif;
}
.panel-head {
  width: 300px;
  height: 25px;
  padding: 0 2px 0 5px;
  background: #f1f1f1;
  color: #666;
  display: flex;
  align-items: center;
  gap: 8px;
  font: 11px Roboto, sans-serif;
}
.dot {
  margin-left: auto;
}
.grip {
  width: 3px;
  height: 11px;
  margin-left: -1px;
  border-left: 1px solid #777;
  border-right: 1px solid #777;
}
.tree {
  padding-top: 5px;
}
.tree li {
  height: 20px;
  margin-bottom: 4px;
  padding-left: 36px;
  display: flex;
  align-items: center;
  gap: 9px;
}
.tree .root {
  padding-left: 18px;
  gap: 8px;
}
.node {
  height: 20px;
  padding-left: 3px;
  background: #f2f2f2;
  display: flex;
  align-items: center;
  gap: 14px;
  font-size: 11px;
  white-space: nowrap;
}
.deep {
  gap: 9px;
}
.deep span {
  margin-left: 5px;
}
.root .node {
  width: 132px;
  gap: 5px;
}
.picked-name {
  width: 82px;
  height: 16px;
  background: #999;
  color: #fff;
  display: flex;
  align-items: center;
  gap: 14px;
  padding-left: 3px;
}
.w134 {
  width: 134px;
}
.w110 {
  width: 110px;
}
.w95 {
  width: 95px;
}
.w103 {
  width: 103px;
}
.w115 {
  width: 115px;
}
.viewcube {
  position: absolute;
  right: 0;
  top: 0;
  width: 120px;
  height: 120px;
  font: bold 13px "Liberation Sans", sans-serif;
}
.face {
  font-size: 13px;
  fill: #444b58;
}
.comments {
  position: absolute;
  left: 4px;
  top: 821px;
  padding-left: 25px;
}
.navbar {
  position: absolute;
  left: 839px;
  top: 822px;
  width: 237px;
  height: 24px;
  padding-left: 3px;
  background: #f3f3f3;
  display: flex;
  align-items: center;
  gap: 5px;
}
.plain {
  margin-right: 4px;
}

/* timeline */
.timeline {
  height: 45px;
  border-top: 2px solid #c4c4c4;
  background: #f0f0f0;
  display: flex;
  align-items: center;
  padding: 4px 11px 0 11px;
}
.features {
  margin-left: 21px;
  padding-top: 1px;
}
.tl-gear {
  margin-left: auto;
}

/* taskbar */
.taskbar {
  height: 36px;
  background: #1f1f1f;
  color: #fff;
  display: flex;
  font-family: "Open Sans", "Noto Sans", sans-serif;
}
.start {
  width: 48px;
  padding-top: 3px;
  display: flex;
  align-items: center;
  justify-content: center;
}
.search {
  width: 344px;
  padding: 3px 0 0 11px;
  background: #f1f1f1;
  border: 1px solid #ccc;
  color: #333;
  display: flex;
  align-items: center;
  gap: 10px;
  font-size: 14px;
}
.pinned {
  display: flex;
}
.pin {
  width: 49px;
  padding-top: 3px;
  display: flex;
  align-items: center;
  justify-content: center;
}
.current {
  background: #4b4b4b;
}
.tray {
  margin-left: auto;
  margin-right: 2px;
  padding-top: 3px;
  display: flex;
  font-size: 12px;
}
.tray > div {
  display: flex;
  align-items: center;
  justify-content: center;
}
.t20 {
  width: 20px;
}
.t22 {
  width: 22px;
}
.t24 {
  width: 24px;
}
.t27 {
  width: 27px;
}
.t28 {
  width: 28px;
}
.t38 {
  width: 38px;
}
.t50 {
  width: 50px;
}
.t66 {
  width: 66px;
}
.t85 {
  width: 85px;
}
.weather {
  gap: 10px;
  font-size: 13px;
}
.tray .clock {
  flex-direction: column;
  line-height: 18px;
  font-size: 11.5px;
  letter-spacing: -.2px;
}
.badge {
  font-size: 11px;
  font-weight: bold;
  fill: #fff;
}
```
